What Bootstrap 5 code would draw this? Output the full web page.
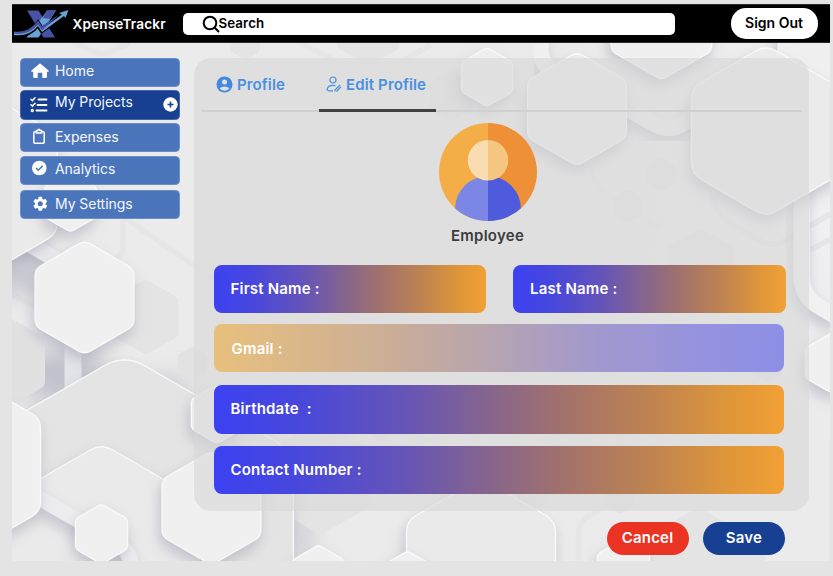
<!DOCTYPE html>
<html lang="en">
<head>
<meta charset="utf-8">
<meta name="viewport" content="width=device-width, initial-scale=1">
<title>XpenseTrackr</title>
<link href="https://cdn.jsdelivr.net/npm/bootstrap@5.3.0/dist/css/bootstrap.min.css" rel="stylesheet">
<style>
body{background:#e4e4e4;font-family:Inter,"Liberation Sans",sans-serif;overflow:hidden;height:576px}
.frame{margin:4px 3px 0 11.5px;width:818.5px;height:557px;background:#ebebeb}
.backdrop{left:0;top:0;z-index:0}
.topbar{height:39px;background:#000;padding:0 12px 0 2px;border:1px solid #2b2b2b;border-width:1px 0}
.brand{font-size:13.6px;font-weight:600;letter-spacing:.15px;color:#fff;width:110px;padding-left:4px;padding-top:2px}
.search{width:492px;height:22px;background:#fff;border-radius:5px;padding-left:19px;font-size:13.3px;font-weight:600;letter-spacing:.1px;color:#000}
.search svg{margin-right:-1px}
.signout{width:87px;height:31px;border-radius:15px;background:#fff;font-size:14px;font-weight:600;color:#000;border:0;padding:0 1px 2px 0}
.side{width:159.5px;margin:14.5px 14.5px 0 8.5px;gap:3.2px}
.side a{height:29.5px;border-radius:4.5px;background:#4b75ba;color:#f4f7fc;font-size:14px;letter-spacing:-.05px;text-decoration:none;padding-left:9px;border:1px solid #6b8ec9}
.side a svg{width:20px;height:20px;flex:none;margin-right:5px;margin-bottom:2px}
.side a span{padding-bottom:3px}
.side a.current{background:#173f92;border-color:#4563a8}
.side a.current span{padding-bottom:6px}
.side a.current svg{margin-bottom:0}
.side a.last{margin-top:1.5px}
.side a .plus{width:15px;height:15px;margin:0 1px 0 auto}
.panel{width:615px;height:453.5px;margin-left:-.5px;margin-top:14.5px;border-radius:17px;background:rgba(217,217,217,.62)}
.tabs{height:54px;margin:0 7px 0 8.5px;border-bottom:2px solid #d0d0d0;font-size:15px;font-weight:600;letter-spacing:.13px;color:#4990e2}
.tabs>div{height:54px}
.tabs .t1{width:117px;padding-left:14px}
.tabs .t2{width:117px;padding-left:7px;padding-top:3px;border-bottom:3px solid #414141}
.tabs span{margin-top:1px}
.avatar{width:588px}
.avatar svg{margin-top:11px}
.role{font-size:15px;font-weight:600;letter-spacing:.25px;color:#3c3c3c;line-height:18px;margin-top:6px}
.fields{width:572px;margin-left:20px;margin-top:20px}
.field{height:48.5px;border-radius:8px;color:#fff;font-size:15px;font-weight:600;letter-spacing:.2px;padding-left:17px;width:570px;white-space:pre;
background:linear-gradient(90deg,#3c42f2 0,#4747dd 14%,#6554b8 33%,#8a6788 50%,#a1716d 61%,#c08450 77%,#e09738 91%,#f2a036 100%)}
.field.half{width:272.5px}
.field.mail{padding-left:18px;padding-top:2px;margin-top:10.5px;background:linear-gradient(90deg,#e8c07d 0,#c9ad98 32%,#b4a3b4 51%,#a299cc 66%,#9693dd 84%,#8c8fe6 100%)}
.actions{margin:11px 23.5px 0 0;gap:14.5px}
.actions button{width:82px;height:33px;border-radius:17px;border:0;color:#fff;font-size:15px;font-weight:600;letter-spacing:.2px;padding:0}
.cancel{background:#ea3323}.save{background:#173f92}
</style>
<script src="https://cdn.jsdelivr.net/npm/bootstrap@5.3.0/dist/js/bootstrap.bundle.min.js"></script>
</head>
<body>
<div class="frame position-relative overflow-hidden">
<svg class="backdrop position-absolute" width="818.500" height="557" viewBox="11.500 4 818.500 557" aria-hidden="true">
<defs>
<filter id="soft" x="-40%" y="-40%" width="180%" height="190%"><feDropShadow dx="-2" dy="7" stdDeviation="7" flood-color="#9292a4" flood-opacity=".46"/></filter>
<linearGradient id="right"><stop offset="0" stop-color="#ebebeb" stop-opacity="0"/><stop offset="1" stop-color="#f0f0f2"/></linearGradient>
<linearGradient id="down" x2="0" y2="1"><stop offset=".5" stop-color="#ebebeb" stop-opacity="0"/><stop offset="1" stop-color="#ebebeb"/></linearGradient>
<filter id="blur" x="-50%" y="-50%" width="200%" height="200%"><feGaussianBlur stdDeviation="13"/></filter>
</defs>
<rect x="560" y="40" width="270" height="400" fill="url(#right)"/><rect x="560" y="40" width="270" height="401" fill="url(#down)"/>
<g fill="none" stroke="#e6e6e7" stroke-width="5.5">
<path d="M75 43l20 9q7 4 14 0l20-9M110 208L215 280M122.500 215V247q0 8-8 13L95 270M12 295L35 307M300 43L362 75q8 4 16 0L430 45M590 165q2 20 20 31L660 228M578 562V532q0-10 10-16L640 486M712 195q2 20 20 30l30 17q10 4 20 0L830 214M810 250L830 239"/>
</g>
<g filter="url(#blur)" fill="#a9a9b8" opacity=".65"><ellipse cx="60" cy="375" rx="48" ry="25"/><ellipse cx="18" cy="275" rx="25" ry="18"/><ellipse cx="45" cy="545" rx="38" ry="24"/><ellipse cx="300" cy="530" rx="8" ry="35"/><ellipse cx="172" cy="385" rx="24" ry="7"/></g>
<g fill="none" stroke="#ededf0" stroke-width="16">
<path d="M20 239L65 265" filter="url(#soft)"/><path d="M72.500 340V395" stroke="#e3e4e9" stroke-width="17"/>
<path d="M540 35V50q0 15 16 25" stroke="#f0f0f1" filter="url(#soft)"/><path d="M615 102L654 124q14 8 28 0L702 111" filter="url(#soft)"/>
<path d="M801 190V275q0 20 15 30L838 318" stroke="#f1f1f2" filter="url(#soft)"/>
</g>
<g id="cells"></g>
</svg>
<header class="topbar d-flex align-items-center position-relative">
<svg width="55" height="30" viewBox="0 0 55 30" class="flex-shrink-0" aria-hidden="true">
<path fill="#4752a5" d="M13 1.500H24.500L41 28.500H29.500z"/>
<path fill="#6aa2d6" d="M30 6l3-4.500h9L24.500 28.500H12.500z"/>
<path fill="#4752a5" d="M33 1.500h9L36 10l-7-1z"/>
<path d="M2 26q14 0 22-11l4 6L46 8" fill="none" stroke="#000" stroke-width="5.500"/>
<path d="M0 26q15 2 24-9l4 6L50 7l1.500 2L54.500 1 45 4l3 1.500L28 20l-4-5Q15 25 0 24z" fill="#6aa2d6"/>
<path d="M0 22.500q15 2 24-11l4 6L45 5.500 28 21.500l-4-6Q14 27 0 24.500z" fill="#4752a5"/>
</svg>
<div class="brand flex-shrink-0">XpenseTrackr</div>
<div class="search d-flex align-items-center flex-shrink-0 ms-1"><svg width="18" height="18" viewBox="0 0 18 18" fill="none" stroke="#000" stroke-width="2" class="flex-shrink-0"><circle cx="8" cy="8" r="6.300"/><path d="M12.300 12.300L17 17"/></svg>Search</div>
<button class="signout ms-auto flex-shrink-0">Sign Out</button>
</header>
<div class="d-flex position-relative">
<nav class="side d-flex flex-column flex-shrink-0">
<a href="#" class="d-flex align-items-center"><svg viewBox="0 0 20 20" fill="#fff"><path d="M9.200 2.900a1.300 1.300 0 0 1 1.700 0L18.500 9.500q1 1-.3 1.200H17v5q0 1.300-1.300 1.300H12.300V12.500q0-.8-.8-.8h-3q-.8 0-.8.800V17H4.500Q3.200 17 3.200 15.700v-5H1.700Q.5 10.500 1.500 9.500z"/></svg><span>Home</span></a>
<a href="#" class="current d-flex align-items-center"><svg viewBox="0 0 20 20" fill="none" stroke="#fff" stroke-width="1.900" stroke-linecap="round"><path d="M8.500 4.500H16.500M7.500 10H16.500M6.500 15.500H16.500"/><path stroke-width="1.500" d="M1 4.300l1.400 1.300L5 2.800M1 9.800l1.400 1.300L5 8.300"/><circle cx="2.300" cy="15.500" r=".7"/></svg><span>My Projects</span><svg class="plus" viewBox="0 0 16 16"><circle cx="8" cy="8" r="7.700" fill="#fff"/><path d="M8 4.800v6.400M4.800 8h6.400" stroke="#173f92" stroke-width="1.700"/></svg></a>
<a href="#" class="d-flex align-items-center"><svg viewBox="0 0 20 20" fill="none" stroke="#fff" stroke-width="1.500"><path d="M6.500 4.700H4.800q-1 0-1 1v9.600q0 1 1 1h8.400q1 0 1-1V5.700q0-1-1-1h-1.700M6.500 3.500H8q.2-1.200 1-1.200t1 1.200h1.500V6h-5z"/></svg><span>Expenses</span></a>
<a href="#" class="d-flex align-items-center"><svg viewBox="0 0 20 20"><circle cx="9.300" cy="9" r="7.300" fill="#fff"/><path d="M6 9l2.300 2.200 4.300-4.300" fill="none" stroke="#4b75ba" stroke-width="1.500"/></svg><span>Analytics</span></a>
<a href="#" class="last d-flex align-items-center"><svg viewBox="0 0 20 20"><g fill="#fff" transform="translate(10.300 9.800)"><circle r="5.400"/><rect x="-1.900" y="-7" width="3.800" height="14" rx=".7"/><rect x="-1.900" y="-7" width="3.800" height="14" rx=".7" transform="rotate(60)"/><rect x="-1.900" y="-7" width="3.800" height="14" rx=".7" transform="rotate(120)"/><circle r="2.500" fill="#4b75ba"/></g></svg><span>My Settings</span></a>
</nav>
<main class="flex-shrink-0">
<section class="panel">
<div class="tabs d-flex">
<div class="t1 d-flex align-items-center"><svg width="17" height="17" viewBox="0 0 17 17" class="me-1"><circle cx="8.500" cy="8.500" r="8" fill="#4489dd"/><circle cx="8.500" cy="5.900" r="2.500" fill="#e1e1e1"/><path d="M3.500 12.300q5-3.700 10 0-5 5-10 0z" fill="#e1e1e1"/></svg><span>Profile</span></div>
<div class="t2 d-flex align-items-center"><svg width="16" height="17" viewBox="0 0 16 17" fill="none" stroke="#4990e2" stroke-width="1.200" class="me-1"><circle cx="7" cy="4" r="3"/><path d="M9.500 9.700Q3 8.500 1.300 12.500q-.7 2.300 2 2.300H7M8.800 15.500l.3-1.700 5-4.800M10.500 15.500l4.300-4.700"/></svg><span>Edit Profile</span></div>
</div>
<div class="avatar d-flex flex-column align-items-center">
<svg width="98" height="98" viewBox="0 0 98 98"><defs><clipPath id="disc"><circle cx="49" cy="49" r="49"/></clipPath></defs><g clip-path="url(#disc)"><path fill="#f3ae48" d="M0 0h49v98H0z"/><path fill="#ee9035" d="M49 0h49v98H49z"/><path fill="#7c86e4" d="M16 98V86A33 33 0 0 1 49 53V98z"/><path fill="#4e5bdc" d="M82 98V86A33 33 0 0 0 49 53V98z"/><path fill="#f9dcb0" d="M49 17a20.300 20.300 0 0 0 0 40.600z"/><path fill="#f5c67f" d="M49 17a20.300 20.300 0 0 1 0 40.600z"/></g></svg>
<div class="role">Employee</div>
</div>
<div class="fields d-flex flex-column">
<div class="d-flex justify-content-between"><div class="field half d-flex align-items-center">First Name :</div><div class="field half d-flex align-items-center">Last Name :</div></div>
<div class="field mail d-flex align-items-center">Gmail :</div>
<div class="field d-flex align-items-center" style="margin-top:13px">Birthdate  :</div>
<div class="field d-flex align-items-center" style="margin-top:12px">Contact Number :</div>
</div>
</section>
<div class="actions d-flex justify-content-end"><button class="cancel">Cancel</button><button class="save">Save</button></div>
</main>
</div>
</div>
<script>
// Backdrop hexagons: centre x, centre y, circumradius, corner rounding, fill, raised
const cells=[
[145,317,38,4,'#e4e4e4',0],[192,363,17,3,'#e2e2e3',0],[3,362,48,5,'#e1e1e2',0],[245,43,17,3,'#e4e4e4',0],[368,30,36,4,'#e4e4e4',0],[451,96,26,3,'#e4e4e4',0],
[661,174,17,3,'#e5e5e6',0],[627,206,17,3,'#e5e5e6',0],[700,266,38,4,'#e5e5e6',0],[320,477,58,5,'#e4e4e4',0],[380,425,17,3,'#e5e5e5',0],[531,495,17,3,'#e4e4e4',0],[620,497,17,3,'#e4e4e4',0],[698,584,77,7,'#e4e4e4',0],[766,365,17,3,'#e4e4e4',0],
[-29,184,99,11,'#eaeaea',1],[70,202,30,4,'#f0f0f0',1],[124,549,195,24,'#e4e4e4',1],[101,555.500,112,13,'#eaeaea',1],
['band'],[-40.500,465,93,10,'#f0f0f0',1],[101,534,30,4,'#f0f0f0',1],[216.500,414,29.500,4,'#ededed',1],[211,508,57,7,'#f0f0f0',1],[84,297.500,57,7,'#f0f0f0',1],
[480.500,564,86,11,'#eaeaea',1],[318,575,30,4,'#f0f0f0',1],[407,581,30,4,'#f0f0f0',1],[623,569,30,4,'#f0f0f0',1],
[661,22,58,6,'#f0f0f0',1],[486.500,77,29.500,4,'#eeeeee',1],[576.500,109,57,7,'#ececec',1],[829,42,59,7,'#f0f0f0',1],[765.500,131,86,12,'#ebebeb',1],[831,363,30,4,'#f0f0f0',1]];
function hexPath(cx,cy,r,k){
  const p=[];for(let i=0;i<6;i++){const a=Math.PI/3*i-Math.PI/2;p.push([cx+r*Math.cos(a),cy+r*Math.sin(a)])}
  let d='';const t=k/r;
  p.forEach((q,i)=>{const a=p[(i+5)%6],b=p[(i+1)%6];
    d+=(i?'L':'M')+(q[0]+(a[0]-q[0])*t)+' '+(q[1]+(a[1]-q[1])*t)+'Q'+q[0]+' '+q[1]+' '+(q[0]+(b[0]-q[0])*t)+' '+(q[1]+(b[1]-q[1])*t)});
  return d+'Z'}
document.getElementById('cells').innerHTML=cells.map(c=>c[0]==='band'
 ?'<path d="M35 496L115 542q14 8 16 24" fill="none" stroke="#ededf0" stroke-width="15" filter="url(#soft)"/>'
 :`<path d="${hexPath(c[0],c[1],c[2],c[3])}" fill="${c[4]}" ${c[5]?'stroke="#fafafa" stroke-width="1.3" filter="url(#soft)"':''}/>`).join('');
</script>
</body>
</html>
